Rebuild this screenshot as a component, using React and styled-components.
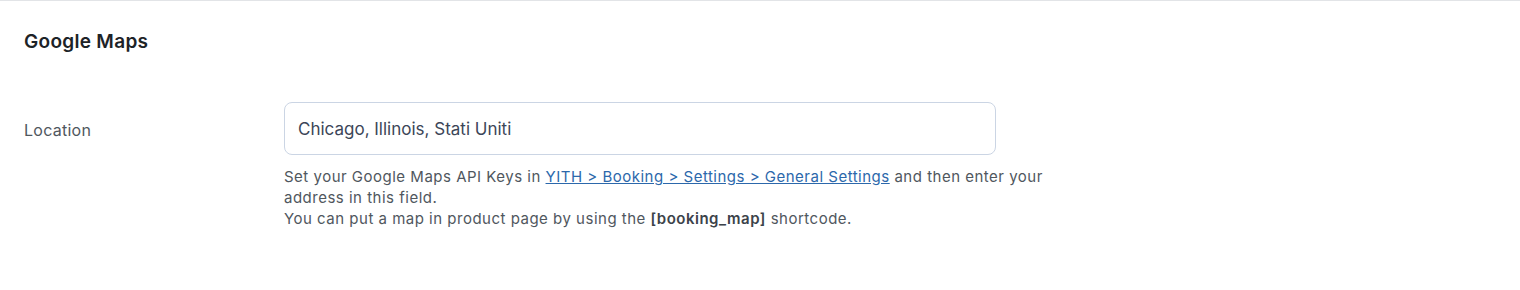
import styled, { createGlobalStyle } from "styled-components";

const GlobalStyle = createGlobalStyle`
  body {
    margin: 0;
    background: #ffffff;
    font-family: Inter, "Noto Sans", "Liberation Sans", sans-serif;
    -webkit-font-smoothing: antialiased;
  }
`;

const App = () => {
  return (
    <>
      <GlobalStyle />
      <Section>
        <Heading>Google Maps</Heading>
        <Row>
          <Label htmlFor="location">Location</Label>
          <Field>
            <Input id="location" defaultValue="Chicago, Illinois, Stati Uniti" />
            <Description>
              Set your Google Maps API Keys in{" "}
              <Link href="#">YITH &gt; Booking &gt; Settings &gt; General Settings</Link>{" "}
              and then enter your address in this field.
              <br />
              You can put a map in product page by using the <b>[booking_map]</b> shortcode.
            </Description>
          </Field>
        </Row>
      </Section>
    </>
  );
};

const Section = styled.div`
  border-top: 1px solid #e2e4e7;
  height: 289px;
  padding: 0 24px;
`;

const Heading = styled.h2`
  color: #1d2327;
  font-size: 19px;
  font-weight: 600;
  letter-spacing: 0.3px;
  line-height: 24px;
  margin: 0;
  padding: 29px 0 0;
`;

const Row = styled.div`
  display: grid;
  grid-template-columns: 260px 1fr;
  margin-top: 48px;
`;

const Label = styled.label`
  color: #50575e;
  font-size: 16px;
  letter-spacing: 0.25px;
  line-height: 53px;
  padding-top: 2px;
`;

const Field = styled.div`
  display: flex;
  flex-direction: column;
`;

const Input = styled.input`
  border: 1px solid #cbd5e4;
  border-radius: 8px;
  box-sizing: border-box;
  color: #3c4658;
  font-family: inherit;
  font-size: 17px;
  height: 53px;
  outline: none;
  padding: 0 13px;
  width: 712px;
`;

const Description = styled.p`
  color: #50575e;
  font-size: 15px;
  letter-spacing: 0.5px;
  line-height: 21px;
  margin: 11px 0 0;
  max-width: 765px;

  & b {
    color: #3c434a;
    font-weight: 600;
  }
`;

const Link = styled.a`
  color: #2c68ab;
  text-decoration: underline;
`;

export default App;
